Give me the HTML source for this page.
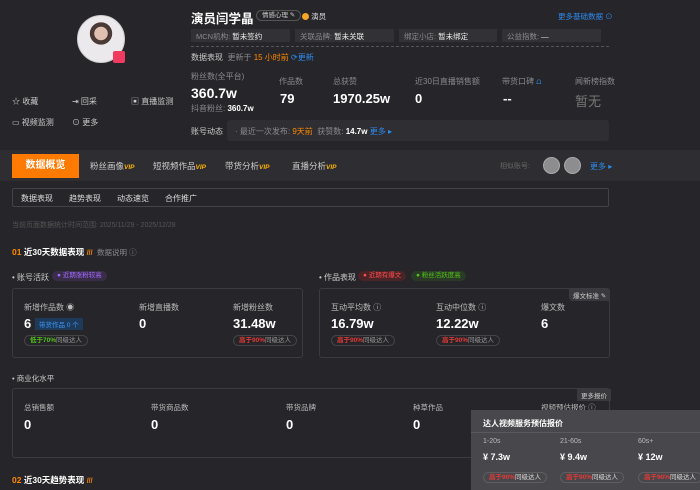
<!DOCTYPE html>
<html><head><meta charset="utf-8"><style>
*{margin:0;padding:0;box-sizing:border-box}
body{width:700px;height:490px;overflow:hidden;background:#262529;font-family:"Liberation Sans","Noto Sans CJK SC",sans-serif;color:#ddd;font-size:8px;position:relative}
.a{position:absolute;white-space:nowrap}
.g{color:#8a898d}.w{color:#fff}.b{color:#2d8cf0}.o{color:#ff8a00}
.box{position:absolute;background:#323135;height:13px;padding:2px 5px;color:#8a898d;font-size:7.5px}
.box span{color:#eee}
.card{position:absolute;border:1px solid #3c3b3f;border-radius:3px}
.v{font-weight:bold;color:#fff;font-size:13px}
.pill{position:absolute;white-space:nowrap;border:1px solid #444;border-radius:7px;height:11px;padding:0 5px;font-size:6.5px;line-height:10px;color:#999}
.r{color:#e53935;font-weight:bold}.gr{color:#52c41a;font-weight:bold}
.vip{color:#ffb400;font-weight:bold;font-style:italic;font-size:6.5px}
</style></head><body>
<!-- avatar -->
<div class="a" style="left:77px;top:15px;width:48px;height:48px;border-radius:50%;background:radial-gradient(circle at 50% 38%,#e0c0b0 0 18%,#4a3a35 19% 30%,#ebe9eb 31%);border:1px solid #ccc"></div>
<div class="a" style="left:113px;top:51px;width:12px;height:12px;background:#f03a5f;border-radius:2px"></div>
<div class="a" style="left:12px;top:96px;color:#ccc">☆ 收藏</div>
<div class="a" style="left:72px;top:96px;color:#ccc">⇥ 回采</div>
<div class="a" style="left:131px;top:96px;color:#ccc">▣ 直播监测</div>
<div class="a" style="left:12px;top:117px;color:#ccc">▭ 视频监测</div>
<div class="a" style="left:72px;top:117px;color:#ccc">⊙ 更多</div>
<!-- header -->
<div class="a w" style="left:191px;top:8px;font-size:12.5px;font-weight:bold">演员闫学晶</div>
<div class="a" style="left:256px;top:10px;border:1px solid #555;border-radius:6px;padding:0 5px;height:11px;font-size:6.5px;line-height:9px;color:#ccc">情感心理 ✎</div>
<div class="a" style="left:302px;top:11px;font-size:7.5px;color:#ddd"><span style="display:inline-block;width:7px;height:7px;border-radius:50%;background:#f5a623;vertical-align:-1px"></span> 演员</div>
<div class="a b" style="left:558px;top:11px;font-size:7.5px">更多基础数据 ⊙</div>
<div class="box" style="left:191px;top:29px;width:99px">MCN机构: <span>暂未签约</span></div>
<div class="box" style="left:295px;top:29px;width:99px">关联品牌: <span>暂未关联</span></div>
<div class="box" style="left:399px;top:29px;width:98px">绑定小店: <span>暂未绑定</span></div>
<div class="box" style="left:502px;top:29px;width:99px">公益指数: <span>—</span></div>
<div class="a" style="left:191px;top:46px;width:418px;border-top:1px dashed #555"></div>
<div class="a" style="left:191px;top:52px;color:#ccc">数据表现 <span class="g">&nbsp;更新于 </span><span class="o">15 小时前</span> <span class="b">⟳更新</span></div>
<div class="a g" style="left:191px;top:71px">粉丝数(全平台)</div>
<div class="a g" style="left:279px;top:76px">作品数</div>
<div class="a g" style="left:333px;top:76px">总获赞</div>
<div class="a g" style="left:415px;top:76px">近30日直播销售额</div>
<div class="a g" style="left:502px;top:76px">带货口碑 <span class="b">⩍</span></div>
<div class="a g" style="left:575px;top:76px">闻新榜指数</div>
<div class="a v" style="left:191px;top:85px;font-size:14px">360.7w</div>
<div class="a v" style="left:280px;top:91px">79</div>
<div class="a v" style="left:333px;top:91px">1970.25w</div>
<div class="a v" style="left:415px;top:91px">0</div>
<div class="a v" style="left:503px;top:91px">--</div>
<div class="a" style="left:575px;top:91px;font-size:13px;color:#777">暂无</div>
<div class="a g" style="left:191px;top:103px">抖音粉丝: <span class="w" style="font-weight:bold">360.7w</span></div>
<div class="a" style="left:191px;top:126px;color:#ccc">账号动态</div>
<div class="a" style="left:227px;top:120px;width:382px;height:21px;background:#2f2e32;border-radius:3px"></div>
<div class="a g" style="left:235px;top:126px">· 最近一次发布: <span class="o">9天前</span> &nbsp;获赞数: <span class="w" style="font-weight:bold">14.7w</span> <span class="b">更多 ▸</span></div>
<!-- tabs -->
<div class="a" style="left:0;top:150px;width:700px;height:31px;background:#2e2d31"></div>
<div class="a" style="left:12px;top:154px;width:67px;height:24px;background:#ff7a00;color:#fff;font-size:10px;font-weight:bold;text-align:center;line-height:24px">数据概览</div>
<div class="a" style="left:90px;top:160px;color:#ccc;font-size:8.5px">粉丝画像<span class="vip">VIP</span></div>
<div class="a" style="left:153px;top:160px;color:#ccc;font-size:8.5px">短视频作品<span class="vip">VIP</span></div>
<div class="a" style="left:225px;top:160px;color:#ccc;font-size:8.5px">带货分析<span class="vip">VIP</span></div>
<div class="a" style="left:292px;top:160px;color:#ccc;font-size:8.5px">直播分析<span class="vip">VIP</span></div>
<div class="a" style="left:500px;top:161px;color:#666;font-size:7px">相似账号:</div>
<div class="a" style="left:543px;top:157px;width:17px;height:17px;border-radius:50%;background:#8d8c8e;border:1px solid #aaa"></div>
<div class="a" style="left:564px;top:157px;width:17px;height:17px;border-radius:50%;background:#8d8c8e;border:1px solid #aaa"></div>
<div class="a b" style="left:590px;top:161px">更多 ▸</div>
<div class="a" style="left:12px;top:188px;width:597px;height:19px;border:1px solid #444;border-radius:2px"></div>
<div class="a" style="left:21px;top:193px;color:#ddd;font-size:8px">数据表现</div>
<div class="a" style="left:69px;top:193px;color:#ddd;font-size:8px">趋势表现</div>
<div class="a" style="left:117px;top:193px;color:#ddd;font-size:8px">动态速览</div>
<div class="a" style="left:165px;top:193px;color:#ddd;font-size:8px">合作推广</div>
<div class="a" style="left:12px;top:220px;color:#555;font-size:7px">当前页面数据统计时间范围: 2025/11/29 - 2025/12/28</div>
<div class="a" style="left:12px;top:246px;font-size:8.5px;font-weight:bold"><span class="o">01</span> <span class="w">近30天数据表现</span> <span class="o" style="font-size:7px">///</span> <span class="g" style="font-weight:normal;font-size:7.5px">&nbsp;数据说明 ⓘ</span></div>
<!-- cards -->
<div class="a" style="left:12px;top:272px;color:#ccc">• 账号活跃</div>
<div class="a" style="left:52px;top:271px;background:#3a2d4a;color:#a06cff;border-radius:6px;padding:0 5px;font-size:6.5px;height:10px;line-height:10px">● 近期涨粉较高</div>
<div class="card" style="left:12px;top:288px;width:291px;height:70px"></div>
<div class="a" style="left:24px;top:302px;color:#bbb">新增作品数 ◉</div>
<div class="a v" style="left:24px;top:316px">6</div>
<div class="a" style="left:35px;top:318px;background:#1e3a5a;color:#3d9bff;font-size:6.5px;padding:1px 4px">带货作品 0 个</div>
<div class="pill" style="left:24px;top:335px"><span class="gr">低于70%</span>同级达人</div>
<div class="a" style="left:139px;top:302px;color:#bbb">新增直播数</div>
<div class="a v" style="left:139px;top:316px">0</div>
<div class="a" style="left:233px;top:302px;color:#bbb">新增粉丝数</div>
<div class="a v" style="left:233px;top:316px">31.48w</div>
<div class="pill" style="left:233px;top:335px"><span class="r">高于90%</span>同级达人</div>

<div class="a" style="left:319px;top:272px;color:#ccc">• 作品表现</div>
<div class="a" style="left:358px;top:271px;background:#4a2326;color:#ff4d4f;border-radius:6px;padding:0 5px;font-size:6.5px;height:10px;line-height:10px">● 近期有爆文</div>
<div class="a" style="left:411px;top:271px;background:#2a3a26;color:#52c41a;border-radius:6px;padding:0 5px;font-size:6.5px;height:10px;line-height:10px">● 粉丝活跃度高</div>
<div class="card" style="left:319px;top:288px;width:291px;height:70px"></div>
<div class="a" style="left:569px;top:289px;background:#3a393d;color:#ccc;font-size:6.5px;padding:1px 4px;border-radius:0 2px 0 4px">爆文标准 ✎</div>
<div class="a" style="left:331px;top:302px;color:#bbb">互动平均数 ⓘ</div>
<div class="a v" style="left:331px;top:316px">16.79w</div>
<div class="pill" style="left:331px;top:335px"><span class="r">高于90%</span>同级达人</div>
<div class="a" style="left:436px;top:302px;color:#bbb">互动中位数 ⓘ</div>
<div class="a v" style="left:436px;top:316px">12.22w</div>
<div class="pill" style="left:436px;top:335px"><span class="r">高于90%</span>同级达人</div>
<div class="a" style="left:541px;top:302px;color:#bbb">爆文数</div>
<div class="a v" style="left:541px;top:316px">6</div>

<div class="a" style="left:12px;top:373px;color:#ccc;font-size:7.5px">• 商业化水平</div>
<div class="card" style="left:12px;top:388px;width:598px;height:70px"></div>
<div class="a" style="left:577px;top:389px;background:#3a393d;color:#ccc;font-size:6.5px;padding:1px 4px">更多报价</div>
<div class="a" style="left:24px;top:402px;color:#bbb;font-size:7.5px">总销售额</div>
<div class="a v" style="left:24px;top:417px">0</div>
<div class="a" style="left:151px;top:402px;color:#bbb;font-size:7.5px">带货商品数</div>
<div class="a v" style="left:151px;top:417px">0</div>
<div class="a" style="left:286px;top:402px;color:#bbb;font-size:7.5px">带货品牌</div>
<div class="a v" style="left:286px;top:417px">0</div>
<div class="a" style="left:413px;top:402px;color:#bbb;font-size:7.5px">种草作品</div>
<div class="a v" style="left:413px;top:417px">0</div>
<div class="a" style="left:541px;top:402px;color:#bbb;font-size:7.5px">视频预估报价 ⓘ</div>
<div class="a" style="left:12px;top:474px;font-size:8.5px;font-weight:bold"><span class="o">02</span> <span class="w">近30天趋势表现</span> <span class="o" style="font-size:7px">///</span></div>
<!-- popover -->
<div class="a" style="left:471px;top:410px;width:229px;height:80px;background:#48474b"></div>
<div class="a" style="left:471px;top:432px;width:229px;border-top:1px solid #5a595d"></div>
<div class="a w" style="left:483px;top:418px;font-size:8px;font-weight:bold">达人视频服务预估报价</div>
<div class="a" style="left:483px;top:438px;color:#bbb;font-size:7px">1-20s</div>
<div class="a" style="left:560px;top:438px;color:#bbb;font-size:7px">21-60s</div>
<div class="a" style="left:638px;top:438px;color:#bbb;font-size:7px">60s+</div>
<div class="a w" style="left:483px;top:452px;font-size:9px;font-weight:bold">¥ 7.3w</div>
<div class="a w" style="left:560px;top:452px;font-size:9px;font-weight:bold">¥ 9.4w</div>
<div class="a w" style="left:638px;top:452px;font-size:9px;font-weight:bold">¥ 12w</div>
<div class="pill" style="left:483px;top:472px;border-color:#5e5d61;color:#ddd"><span class="r">高于90%</span>同级达人</div>
<div class="pill" style="left:560px;top:472px;border-color:#5e5d61;color:#ddd"><span class="r">高于90%</span>同级达人</div>
<div class="pill" style="left:638px;top:472px;border-color:#5e5d61;color:#ddd"><span class="r">高于90%</span>同级达人</div>
</body></html>
